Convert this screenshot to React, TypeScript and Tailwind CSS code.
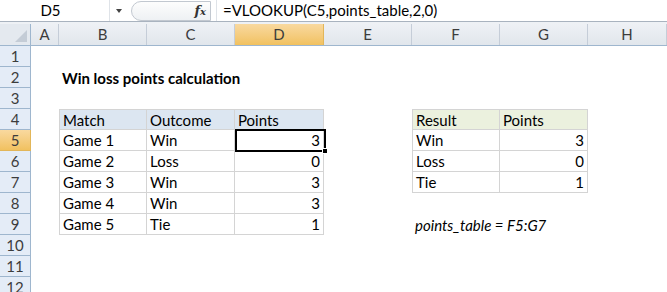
import React from 'react';

const cols = [
  { key: 'A', w: 28 },
  { key: 'B', w: 88 },
  { key: 'C', w: 88 },
  { key: 'D', w: 89 },
  { key: 'E', w: 88 },
  { key: 'F', w: 88 },
  { key: 'G', w: 88 },
  { key: 'H', w: 79 },
];

type Cell = { text: string; align?: 'right'; bold?: boolean; italic?: boolean; fill?: string; grid?: boolean };

// cell data keyed by "col+row"
const cells: Record<string, Cell> = {
  B2: { text: 'Win loss points calculation', bold: true },
  B4: { text: 'Match', fill: 'blue', grid: true },
  C4: { text: 'Outcome', fill: 'blue', grid: true },
  D4: { text: 'Points', fill: 'blue', grid: true },
  B5: { text: 'Game 1', grid: true },
  C5: { text: 'Win', grid: true },
  D5: { text: '3', align: 'right', grid: true },
  B6: { text: 'Game 2', grid: true },
  C6: { text: 'Loss', grid: true },
  D6: { text: '0', align: 'right', grid: true },
  B7: { text: 'Game 3', grid: true },
  C7: { text: 'Win', grid: true },
  D7: { text: '3', align: 'right', grid: true },
  B8: { text: 'Game 4', grid: true },
  C8: { text: 'Win', grid: true },
  D8: { text: '3', align: 'right', grid: true },
  B9: { text: 'Game 5', grid: true },
  C9: { text: 'Tie', grid: true },
  D9: { text: '1', align: 'right', grid: true },
  F4: { text: 'Result', fill: 'green', grid: true },
  G4: { text: 'Points', fill: 'green', grid: true },
  F5: { text: 'Win', grid: true },
  G5: { text: '3', align: 'right', grid: true },
  F6: { text: 'Loss', grid: true },
  G6: { text: '0', align: 'right', grid: true },
  F7: { text: 'Tie', grid: true },
  G7: { text: '1', align: 'right', grid: true },
  F9: { text: 'points_table = F5:G7', italic: true },
};

const rows = [1, 2, 3, 4, 5, 6, 7, 8, 9, 10, 11, 12];

function FormulaBar() {
  return (
    <div className="flex h-[22px] border-b border-[#a9b3bf] bg-white text-[15px] text-black">
      <div className="relative flex w-[110px] items-center justify-center border-r border-[#dfe3e8]">
        <span className="-ml-2">D5</span>
      </div>
      <div className="flex w-[18px] items-center justify-center">
        <div className="h-0 w-0 border-x-[3.5px] border-t-[4px] border-x-transparent border-t-[#444]" />
      </div>
      <div className="flex w-[88px] items-center">
        <div className="ml-[3px] flex h-[20px] w-[80px] items-center justify-end rounded-l-full border border-[#c2c8d0] bg-gradient-to-b from-[#fdfdfd] to-[#eef1f4] pr-[4px]">
          <span className="font-['DejaVu_Serif',serif] text-[13px] font-bold italic text-[#333]">
            f<span className="text-[10px]">x</span>
          </span>
        </div>
      </div>
      <div className="flex flex-1 items-center border-l border-[#dfe3e8] pl-[6px]">=VLOOKUP(C5,points_table,2,0)</div>
    </div>
  );
}

function ColumnHeaders() {
  return (
    <div className="flex h-[22px] border-b border-[#9eb6ce] text-[15px] text-[#3c3c3c]">
      <div className="relative w-[31px] border-r border-[#9eb6ce] bg-[#e4e9ef]">
        <div className="absolute bottom-[3px] right-[3px] h-0 w-0 border-b-[12px] border-l-[12px] border-l-transparent border-b-[#c4ccd6]" />
      </div>
      {cols.map((c) => (
        <div
          key={c.key}
          style={{ width: c.w }}
          className={
            c.key === 'D'
              ? 'flex items-center justify-center border-r border-[#e2b659] bg-gradient-to-b from-[#f9d99f] to-[#f1c15f]'
              : 'flex items-center justify-center border-r border-[#c5cdd8] bg-gradient-to-b from-[#eef1f5] to-[#e1e6ec]'
          }
        >
          {c.key}
        </div>
      ))}
    </div>
  );
}

function Sheet() {
  return (
    <div className="relative">
      {rows.map((r) => (
        <div key={r} className="flex h-[21px]">
          <div
            className={
              r === 5
                ? 'flex w-[31px] items-center justify-center border-r border-b border-[#e2b659] bg-gradient-to-b from-[#f9d99f] to-[#f1c15f] text-[15px] text-[#3c3c3c]'
                : 'flex w-[31px] items-center justify-center border-r border-b border-[#9eb6ce] bg-[#e4ecf7] text-[15px] text-[#3c3c3c]'
            }
          >
            {r}
          </div>
          {cols.map((c) => {
            const cell = cells[c.key + r];
            let cls = 'flex items-center px-[3px] pt-[1px] text-[15px] text-black whitespace-nowrap';
            if (cell?.grid) {
              cls += ' border-r border-b border-[#d4d4d4]';
              if (c.key === 'B' || c.key === 'F') cls += ' border-l';
              if (r === 4) cls += ' border-t';
            }
            if (cell?.fill === 'blue') cls += ' bg-[#dce6f1]';
            if (cell?.fill === 'green') cls += ' bg-[#ebf1de]';
            if (cell?.align === 'right') cls += ' justify-end';
            if (cell?.bold) cls += ' font-bold';
            if (cell?.italic) cls += ' italic';
            return (
              <div key={c.key} style={{ width: c.w }} className={cls}>
                {cell?.text}
              </div>
            );
          })}
        </div>
      ))}
      {/* active cell D5 */}
      <div className="pointer-events-none absolute left-[235px] top-[83px] h-[23px] w-[91px] border-2 border-black">
        <div className="absolute -bottom-[4px] -right-[4px] h-[6px] w-[6px] border border-white bg-black" />
      </div>
    </div>
  );
}

export default function App() {
  return (
    <div className="h-[292px] w-[667px] overflow-hidden bg-white font-['Lato',sans-serif]">
      <FormulaBar />
      <div className="h-[2px] bg-[#eef1f5]" />
      <ColumnHeaders />
      <Sheet />
    </div>
  );
}
